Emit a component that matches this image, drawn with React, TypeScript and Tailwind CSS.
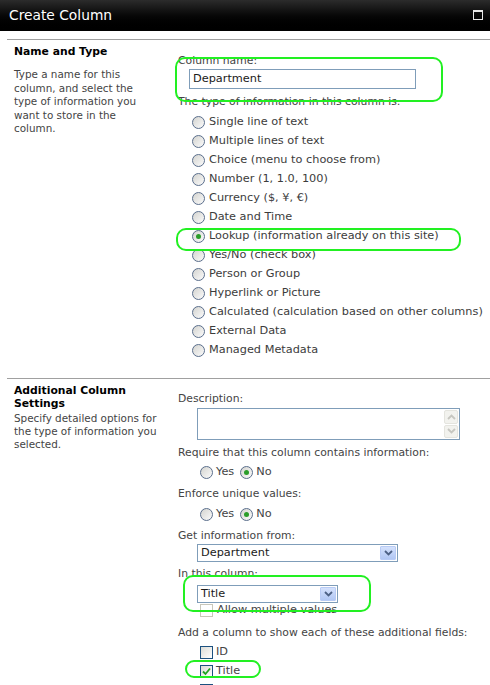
import React from 'react';

// Create Column dialog (SharePoint style) with green annotation marks

const Radio = ({ checked = false }: { checked?: boolean }) => (
  <span className="relative inline-flex h-[13px] w-[13px] shrink-0 items-center justify-center rounded-full border border-[#5a6e8c] bg-gradient-to-br from-[#d4d4d0] to-[#fbfbfb]">
    {checked && <span className="h-[5px] w-[5px] rounded-full bg-[#2a9d2a]" />}
  </span>
);

const Checkbox = ({ checked = false, disabled = false }: { checked?: boolean; disabled?: boolean }) => (
  <span
    className={`inline-flex h-[13px] w-[13px] shrink-0 items-center justify-center border ${
      disabled ? 'border-[#c9c7ba] bg-white' : 'border-[#1c5180] bg-gradient-to-br from-[#dcdcd6] to-[#ffffff]'
    }`}
  >
    {checked && (
      <svg width="9" height="9" viewBox="0 0 9 9">
        <path d="M1 4.5 L3.5 7 L8 1.5" stroke="#21a121" strokeWidth="1.8" fill="none" />
      </svg>
    )}
  </span>
);

const Chevron = ({ up = false, color }: { up?: boolean; color: string }) => (
  <svg width="9" height="6" viewBox="0 0 9 6">
    <path d={up ? 'M1 5 L4.5 1.5 L8 5' : 'M1 1 L4.5 4.5 L8 1'} stroke={color} strokeWidth="1.8" fill="none" />
  </svg>
);

const Select = ({ value, width }: { value: string; width: string }) => (
  <div className={`flex h-[18px] ${width} items-center justify-between border border-[#7f9db9] bg-white pl-[3px] pr-[1px]`}>
    <span className="text-[11.3px] text-[#1a1a1a]">{value}</span>
    <span className="flex h-[14px] w-[16px] items-center justify-center rounded-[1px] border border-[#b8cbf5] bg-gradient-to-b from-[#d4e1fc] to-[#b1c7f4]">
      <Chevron color="#4d6185" />
    </span>
  </div>
);

const types = [
  'Single line of text',
  'Multiple lines of text',
  'Choice (menu to choose from)',
  'Number (1, 1.0, 100)',
  'Currency ($, ¥, €)',
  'Date and Time',
  'Lookup (information already on this site)',
  'Yes/No (check box)',
  'Person or Group',
  'Hyperlink or Picture',
  'Calculated (calculation based on other columns)',
  'External Data',
  'Managed Metadata',
];

const Oval = ({ cls }: { cls: string }) => (
  <div className={`pointer-events-none absolute rounded-[10px] border-2 border-[#22f022] ${cls}`} />
);

export default function App() {
  return (
    <div
      className="relative h-[685px] w-[490px] overflow-hidden bg-white text-[10.8px] text-[#444]"
      style={{ fontFamily: '"DejaVu Sans", Verdana, sans-serif' }}
    >
      {/* title bar */}
      <div className="flex h-[31px] items-center justify-between bg-gradient-to-b from-[#2c2c2c] via-[#080808] to-black pl-[9px] pr-[7px]">
        <span className="text-[13.8px] text-white">Create Column</span>
        <span className="mb-[2px] h-[10px] w-[10px] border border-t-2 border-[#e8e8e8]" />
      </div>

      <div className="ml-[7px] mt-[8px]">
        {/* Name and Type */}
        <div className="flex border-t border-[#a0a0a0]">
          <div className="w-[164px] shrink-0 pl-[7px] pt-[5px]">
            <div className="text-[10.8px] font-bold leading-[14px] text-black">Name and Type</div>
            <div className="mt-[9px] w-[138px] text-[10.4px] leading-[13.5px] text-[#444]">
              Type a name for this column, and select the type of information you want to store in the column.
            </div>
          </div>
          <div className="flex-1 pb-[18px] pl-[7px] pt-[14px]">
            <div className="leading-[14px]">Column name:</div>
            <div className="ml-[11px] mt-[1px] flex h-[20px] w-[227px] items-center border border-[#7f9db9] pl-[3px] text-[11.3px] text-[#1a1a1a]">
              Department
            </div>
            <div className="mt-[6px] leading-[14px]">The type of information in this column is:</div>
            <div className="mt-[4px] pl-[14px]">
              {types.map((t) => (
                <div key={t} className="flex h-[19px] items-center gap-[4px] text-[#3c3c3c]">
                  <Radio checked={t.startsWith('Lookup')} />
                  <span className="text-[11.3px]">{t}</span>
                </div>
              ))}
            </div>
          </div>
        </div>

        {/* Additional Column Settings */}
        <div className="flex border-t border-[#a0a0a0]">
          <div className="w-[164px] shrink-0 pl-[7px] pt-[5px]">
            <div className="text-[10.8px] font-bold leading-[13px] text-black">Additional Column Settings</div>
            <div className="mt-[2px] text-[10.4px] leading-[13px] text-[#444]">
              Specify detailed options for the type of information you selected.
            </div>
          </div>
          <div className="flex-1 pl-[7px] pt-[13px]">
            <div className="leading-[14px]">Description:</div>
            <div className="ml-[19px] mt-[2px] flex h-[32px] w-[263px] justify-end border border-[#7f9db9] bg-white">
              <div className="flex w-[16px] flex-col gap-[1px] p-[1px]">
                <span className="flex flex-1 items-center justify-center rounded-[2px] border border-[#e4e4de] bg-[#f2f2ee]">
                  <Chevron up color="#c6c6c0" />
                </span>
                <span className="flex flex-1 items-center justify-center rounded-[2px] border border-[#e4e4de] bg-[#f2f2ee]">
                  <Chevron color="#c6c6c0" />
                </span>
              </div>
            </div>
            <div className="mt-[6px] leading-[14px]">Require that this column contains information:</div>
            <div className="mt-[3px] flex h-[19px] items-center pl-[22px]">
              <Radio />
              <span className="ml-[3px] mr-[6px] text-[11.3px]">Yes</span>
              <Radio checked />
              <span className="ml-[3px] text-[11.3px]">No</span>
            </div>
            <div className="mt-[5px] leading-[14px]">Enforce unique values:</div>
            <div className="mt-[4px] flex h-[19px] items-center pl-[22px]">
              <Radio />
              <span className="ml-[3px] mr-[6px] text-[11.3px]">Yes</span>
              <Radio checked />
              <span className="ml-[3px] text-[11.3px]">No</span>
            </div>
            <div className="mt-[5px] leading-[14px]">Get information from:</div>
            <div className="ml-[19px] mt-[1px]">
              <Select value="Department" width="w-[201px]" />
            </div>
            <div className="mt-[5px] leading-[14px]">In this column:</div>
            <div className="ml-[19px] mt-[4px]">
              <Select value="Title" width="w-[141px]" />
            </div>
            <div className="flex h-[14px] items-center gap-[4px] pl-[22px] text-[#444]">
              <Checkbox disabled />
              <span className="text-[11.3px]">Allow multiple values</span>
            </div>
            <div className="mt-[9px] leading-[14px]">Add a column to show each of these additional fields:</div>
            <div className="mt-[3px] pl-[22px]">
              <div className="flex h-[19px] items-center gap-[3px]">
                <Checkbox />
                <span className="text-[11.3px]">ID</span>
              </div>
              <div className="flex h-[19px] items-center gap-[3px]">
                <Checkbox checked />
                <span className="text-[11.3px]">Title</span>
              </div>
              <div className="flex h-[19px] items-center gap-[3px]">
                <Checkbox />
                <span className="text-[11.3px]">Modified</span>
              </div>
            </div>
          </div>
        </div>
      </div>

      {/* annotation marks */}
      <Oval cls="left-[175px] top-[57px] h-[45px] w-[268px]" />
      <Oval cls="left-[176px] top-[228px] h-[23px] w-[285px]" />
      <Oval cls="left-[183px] top-[575px] h-[37px] w-[188px]" />
      <Oval cls="left-[185px] top-[660px] h-[18px] w-[76px]" />
    </div>
  );
}
